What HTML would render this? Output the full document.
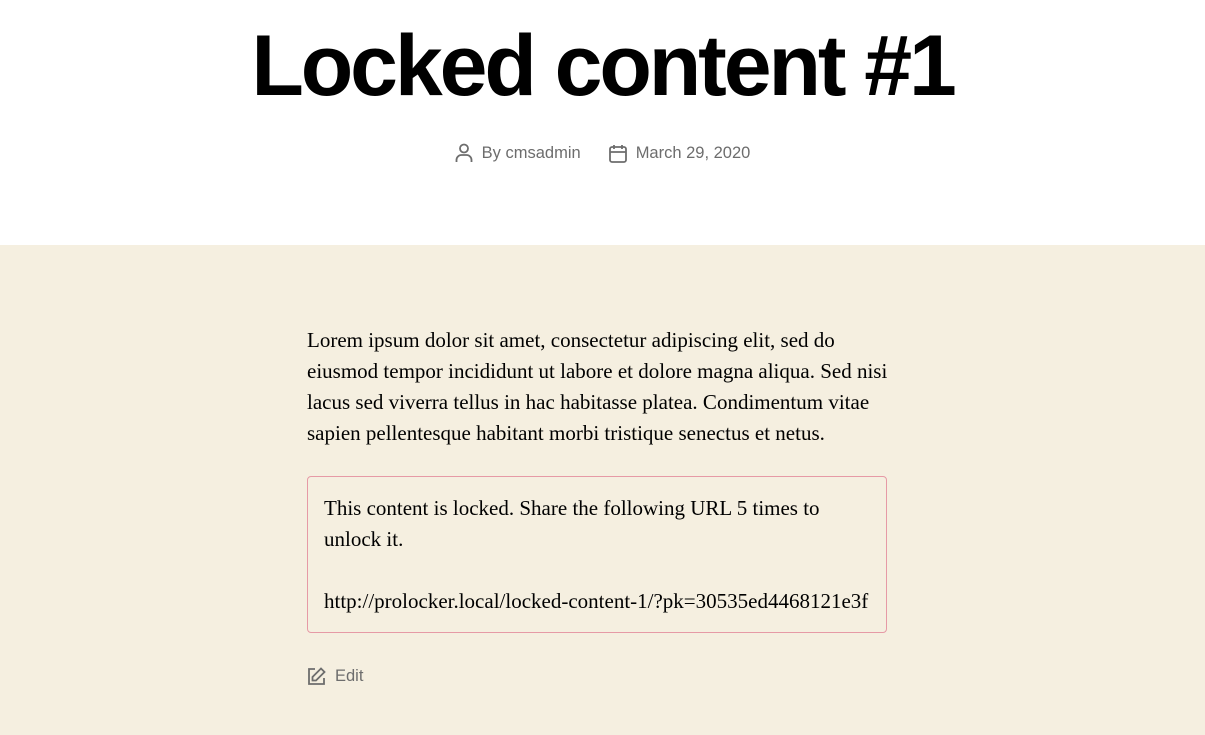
<!DOCTYPE html>
<html><head><meta charset="utf-8"><style>
body{margin:0;width:1205px;height:735px;overflow:hidden;background:#fff;font-family:"Liberation Sans",sans-serif}
.top{height:245px;background:#fff;position:relative}
h1{margin:0;position:absolute;top:11px;left:0;width:1205px;text-align:center;font-size:86px;font-weight:700;letter-spacing:-3.1px;color:#000;line-height:110px}
.meta{position:absolute;top:143px;left:0;width:1205px;text-align:center;font-size:16.5px;color:#6d6d6d}
.meta span{display:inline-flex;align-items:center;margin:0 14px}
.meta svg{margin-right:9px}
.main{background:#f5efe0;height:490px;position:relative}
.c{position:absolute;left:307px;width:592px;font-family:"Liberation Serif",serif;font-size:21px;line-height:31px;color:#000}
p{margin:0}
.box{position:absolute;left:307px;top:231px;width:578px;height:155px;border:1px solid #e69aa6;border-radius:4px}
.box div{position:absolute;left:16px;top:16px;width:548px;font-family:"Liberation Serif",serif;font-size:21px;line-height:31px}
.box div.u{width:600px;top:109px}
.edit{position:absolute;left:307px;top:422px;font-size:16.5px;color:#6d6d6d;display:flex;align-items:center}
</style></head><body>
<div class="top">
<h1>Locked content #1</h1>
<div class="meta"><span><svg width="18" height="20" viewBox="0 0 18 20" fill="none" stroke="#6d6d6d" stroke-width="1.8"><circle cx="9" cy="5.5" r="4"/><path d="M1.5 19v-2a5 5 0 0 1 5-5h5a5 5 0 0 1 5 5v2"/></svg>By cmsadmin</span><span><svg width="18" height="19" viewBox="0 0 18 19" fill="none" stroke="#6d6d6d" stroke-width="1.8"><rect x="1" y="3" width="16" height="15" rx="2"/><path d="M1 8h16M5 1v4M13 1v4"/></svg>March 29, 2020</span></div>
</div>
<div class="main">
<div class="c" style="top:80px"><p>Lorem ipsum dolor sit amet, consectetur adipiscing elit, sed do eiusmod tempor incididunt ut labore et dolore magna aliqua. Sed nisi lacus sed viverra tellus in hac habitasse platea. Condimentum vitae sapien pellentesque habitant morbi tristique senectus et netus.</p></div>
<div class="box"><div>This content is locked. Share the following URL 5 times to unlock it.</div><div class="u">http://prolocker.local/locked-content-1/?pk=30535ed4468121e3f</div></div>
<div class="edit"><svg width="19" height="19" viewBox="0 0 19 19" fill="none" stroke="#6d6d6d" stroke-width="1.8"><path d="M8 2H2v15h15v-6"/><path d="M14 1.5l3.5 3.5L9 13.5H5.5V10z"/></svg><span style="margin-left:9px">Edit</span></div>
</div>
</body></html>
